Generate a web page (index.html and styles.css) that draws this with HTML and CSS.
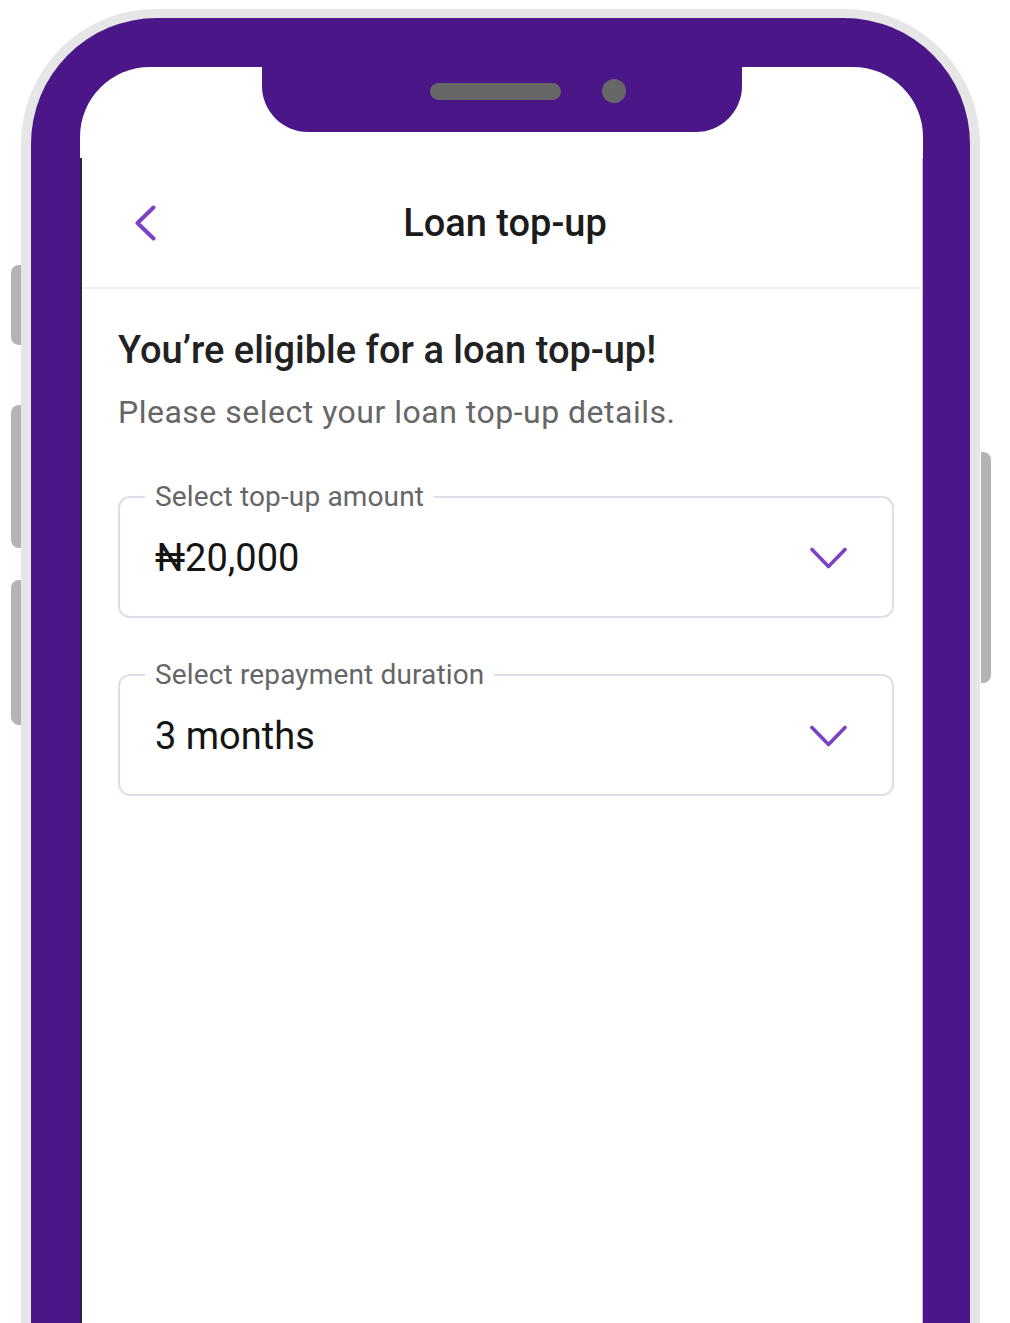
FILE: index.html
```html
<!DOCTYPE html>
<html lang="en">
<head>
<meta charset="utf-8">
<title>Loan top-up</title>
<link rel="stylesheet" href="styles.css">
</head>
<body>
<div class="page">
  <span class="side-btn side-btn--l1"></span>
  <span class="side-btn side-btn--l2"></span>
  <span class="side-btn side-btn--l3"></span>
  <span class="side-btn side-btn--r1"></span>
  <div class="phone">
    <div class="frame">
      <div class="notch">
        <span class="speaker"></span>
        <span class="camera"></span>
      </div>
      <div class="screen">
        <div class="screen-top"></div>
        <div class="app">
          <header class="app-header">
            <div class="back">
              <svg width="21" height="36" viewBox="0 0 21 36" aria-hidden="true">
                <polyline points="18.5,2.5 2.5,18 18.5,33.5" fill="none" stroke="#7b43c3" stroke-width="4" stroke-linecap="round" stroke-linejoin="round"/>
              </svg>
            </div>
            <h1 class="title">Loan top-up</h1>
            <div></div>
          </header>
          <main class="content">
            <h2 class="heading">You’re eligible for a loan top-up!</h2>
            <p class="sub">Please select your loan top-up details.</p>
            <fieldset class="field">
              <legend class="field-label">Select top-up amount</legend>
              <div class="field-row">
                <span class="field-value">₦20,000</span>
                <svg class="chev" width="37" height="23" viewBox="0 0 37 23" aria-hidden="true">
                  <polyline points="2,2.5 18.5,19.5 35,2.5" fill="none" stroke="#7b43c3" stroke-width="3.6" stroke-linecap="round" stroke-linejoin="round"/>
                </svg>
              </div>
            </fieldset>
            <fieldset class="field">
              <legend class="field-label">Select repayment duration</legend>
              <div class="field-row">
                <span class="field-value">3 months</span>
                <svg class="chev" width="37" height="23" viewBox="0 0 37 23" aria-hidden="true">
                  <polyline points="2,2.5 18.5,19.5 35,2.5" fill="none" stroke="#7b43c3" stroke-width="3.6" stroke-linecap="round" stroke-linejoin="round"/>
                </svg>
              </div>
            </fieldset>
          </main>
        </div>
      </div>
    </div>
  </div>
</div>
</body>
</html>
```
FILE: styles.css
```css
* { box-sizing: border-box; }
html, body { margin: 0; padding: 0; background: #ffffff; }
body { font-family: Roboto, "Liberation Sans", Arial, sans-serif; }

.page {
  position: relative;
  width: 1010px;
  height: 1323px;
  overflow: hidden;
  background: #ffffff;
}

.phone {
  margin: 9px 0 0 21px;
  width: 959px;
  height: 1400px;
  background: #e6e6e6;
  border-radius: 135px 135px 0 0;
  padding: 9px 10px 0 10px;
}

.frame {
  position: relative;
  height: 100%;
  background: #4a1688;
  border-radius: 126px 126px 0 0;
  padding: 49px 47px 0 49px;
}

.notch {
  position: absolute;
  left: 231px;
  top: 40px;
  width: 480px;
  height: 74px;
  background: #4a1688;
  border-radius: 0 0 46px 46px;
  z-index: 2;
}
.speaker {
  position: absolute;
  left: 168px;
  top: 25px;
  width: 131px;
  height: 17px;
  border-radius: 9px;
  background: #676767;
}
.camera {
  position: absolute;
  left: 340px;
  top: 21px;
  width: 24px;
  height: 24px;
  border-radius: 50%;
  background: #676767;
}

.side-btn {
  position: absolute;
  width: 10px;
  background: #b4b4b4;
}
.side-btn--l1 { left: 11px; top: 265px; height: 80px; border-radius: 8px 0 0 8px; }
.side-btn--l2 { left: 11px; top: 405px; height: 143px; border-radius: 8px 0 0 8px; }
.side-btn--l3 { left: 11px; top: 580px; height: 145px; border-radius: 8px 0 0 8px; }
.side-btn--r1 { left: 981px; top: 452px; height: 231px; border-radius: 0 8px 8px 0; }

.screen {
  height: 100%;
  background: #ffffff;
  border-radius: 70px 70px 0 0;
  display: flex;
  flex-direction: column;
}
.screen-top { height: 91px; flex: none; }
.app {
  flex: 1;
  border-left: 2px solid #2a2738;
  border-right: 1px solid #cdb8ea;
}

.app-header {
  height: 131px;
  border-bottom: 2px solid #efefef;
  display: grid;
  grid-template-columns: 1fr auto 1fr;
  align-items: center;
}
.back {
  padding-left: 53px;
  display: flex;
  align-items: center;
}
.back svg { display: block; }
.title {
  margin: 0;
  padding-left: 6px;
  font-size: 38px;
  font-weight: 500;
  color: #1b1b1b;
  line-height: 44px;
}

.content {
  padding: 39px 28px 0 36px;
}
.heading {
  margin: 0;
  font-size: 38px;
  font-weight: 500;
  line-height: 44px;
  color: #222222;
}
.sub {
  margin: 22px 0 0;
  font-size: 32px;
  font-weight: 400;
  letter-spacing: 0.5px;
  line-height: 37px;
  color: #666666;
}

.field {
  margin: 51px 0 0;
  border: 2px solid #dcdfea;
  border-radius: 12px;
  padding: 0 45px 12px 25px;
  min-width: 0;
}
.field + .field { margin-top: 42px; }
.field-label {
  padding: 0 10px;
  font-size: 28px;
  letter-spacing: 0.15px;
  line-height: 30px;
  color: #666666;
}
.field-row {
  height: 92px;
  padding-left: 10px;
  display: flex;
  align-items: center;
  justify-content: space-between;
}
.field-value {
  font-size: 38px;
  color: #151515;
  line-height: 44px;
}
.chev { display: block; }
```
